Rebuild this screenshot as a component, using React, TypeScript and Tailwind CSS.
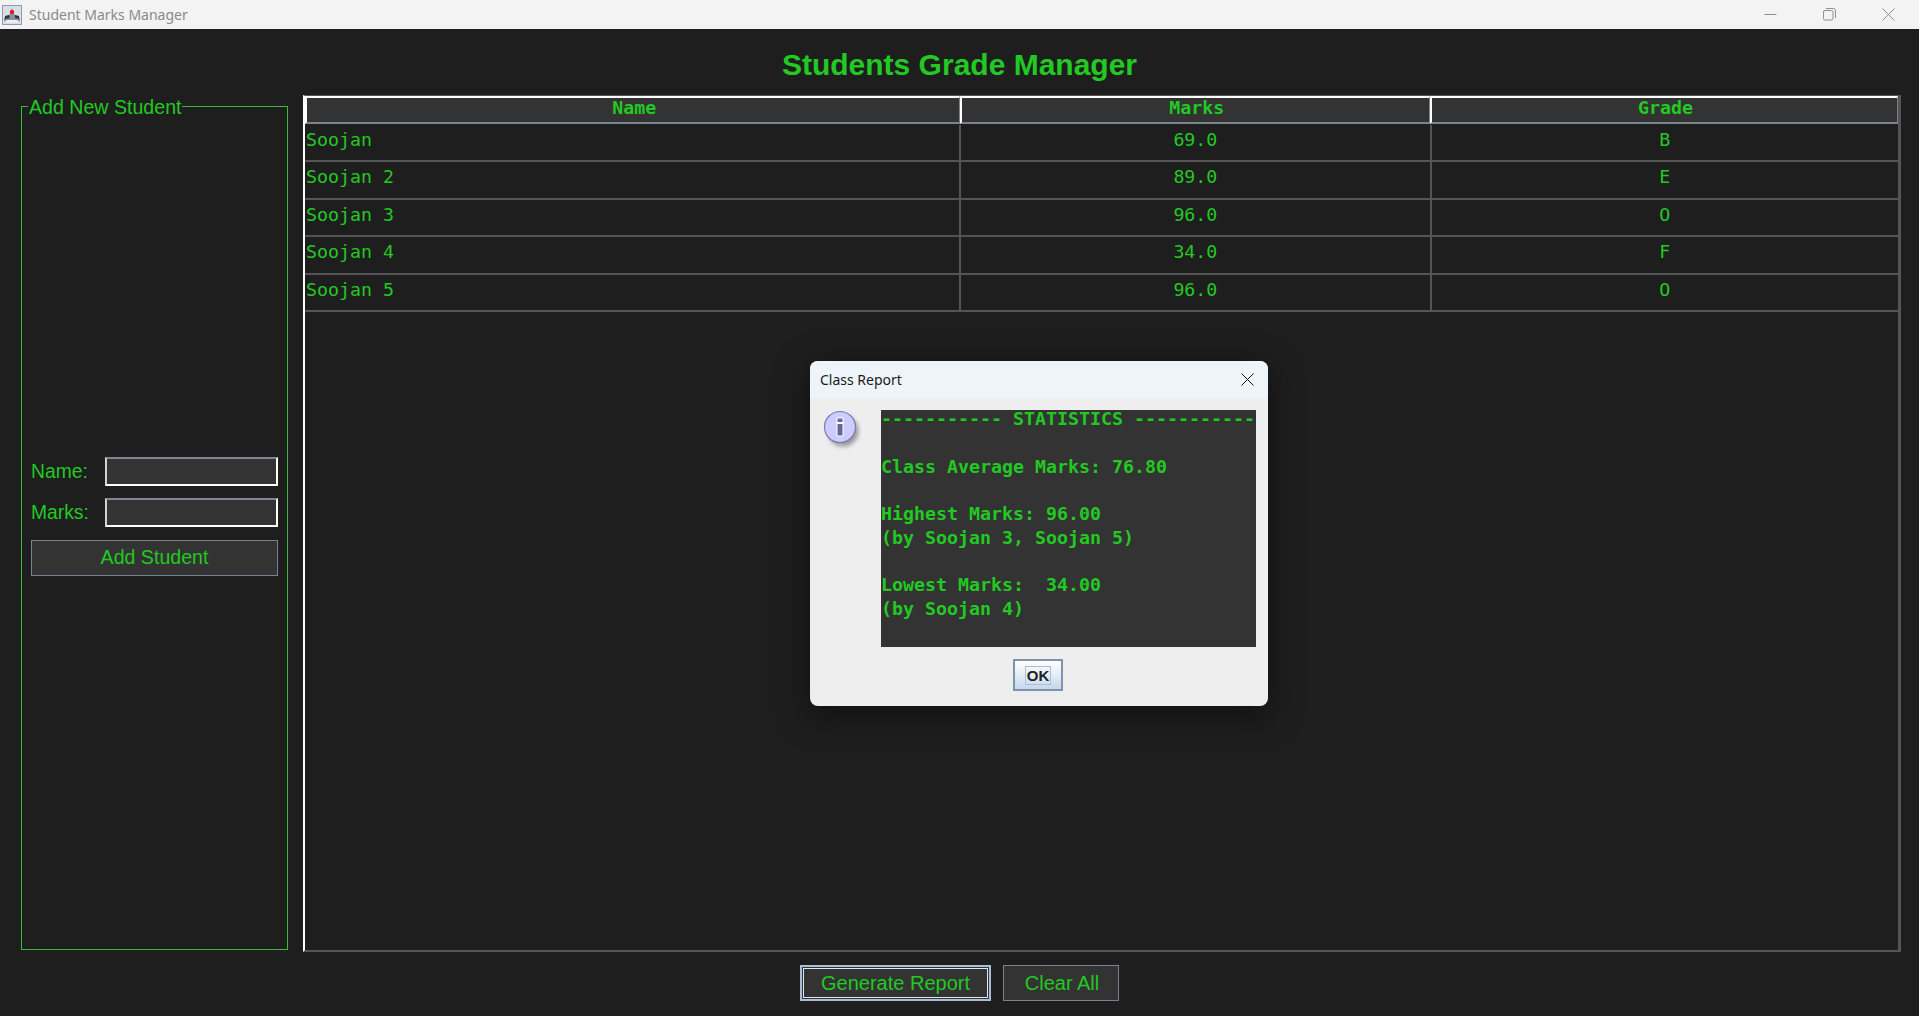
const green = 'text-[#22c922]';

const students = [
  { name: 'Soojan', marks: '69.0', grade: 'B' },
  { name: 'Soojan 2', marks: '89.0', grade: 'E' },
  { name: 'Soojan 3', marks: '96.0', grade: 'O' },
  { name: 'Soojan 4', marks: '34.0', grade: 'F' },
  { name: 'Soojan 5', marks: '96.0', grade: 'O' },
];

function JavaIcon() {
  return (
    <svg width="20" height="20" viewBox="0 0 20 20" className="shrink-0">
      <rect x="0.5" y="0.5" width="19" height="19" fill="#d8dde6" stroke="#8f9bb0" />
      <path d="M2 13 L8 9 L10 3 L12 9 L18 13 L18 16 L2 16 Z" fill="#8a8e96" />
      <path d="M3 11 L7 10 L8 13 L3 14 Z M13 10 L17 11 L17 14 L13 13 Z" fill="#30343c" />
      <path d="M4 15 L16 15 L15 17.5 L5 17.5 Z" fill="#f2f2f2" />
      <circle cx="10" cy="7" r="2.2" fill="#e01b24" />
    </svg>
  );
}

function WindowButtons() {
  return (
    <div className="flex items-center gap-[46px] pr-[24px]">
      <svg width="13" height="13" viewBox="0 0 13 13">
        <path d="M0.5 6.5H12.5" stroke="#8f8f8f" strokeWidth="1" />
      </svg>
      <svg width="13" height="13" viewBox="0 0 13 13" fill="none" stroke="#8f8f8f">
        <rect x="0.5" y="2.5" width="9.5" height="9.5" rx="1.5" />
        <path d="M3 0.5H10.5A2 2 0 0 1 12.5 2.5V10" />
      </svg>
      <svg width="13" height="13" viewBox="0 0 13 13" stroke="#8f8f8f">
        <path d="M0.5 0.5L12.5 12.5M12.5 0.5L0.5 12.5" />
      </svg>
    </div>
  );
}

function AddStudentPanel() {
  return (
    <div className="relative mt-[11px] ml-[21px] h-[844px] w-[267px] border border-[#3fb83f] flex flex-col justify-center pb-[24px] px-[9px]">
      <span className={`absolute -top-[12px] left-[6px] bg-[#1e1e1e] pl-[1px] text-[19.6px] leading-[24px] ${green}`}>
        Add New Student
      </span>
      <div className="flex flex-col">
        <div className="flex items-center justify-between h-[29px]">
          <span className={`pt-[2px] text-[19.3px] ${green}`}>Name:</span>
          <div className="w-[173px] h-[29px] bg-[#333333] border-2 border-white border-t-[#7d8794] border-l-[#d0d4d8]" />
        </div>
        <div className="flex items-center justify-between h-[29px] mt-[12px]">
          <span className={`pt-[2px] text-[19.3px] ${green}`}>Marks:</span>
          <div className="w-[173px] h-[29px] bg-[#333333] border-2 border-white border-t-[#7d8794] border-l-[#d0d4d8]" />
        </div>
        <button className={`mt-[13px] h-[36px] pt-[1px] bg-[#333333] border border-[#77838f] text-[19.6px] ${green}`}>
          Add Student
        </button>
      </div>
    </div>
  );
}

function StudentTable() {
  return (
    <div className="ml-[15px] w-[1598px] h-[857px] border-l-2 border-l-white border-b-2 border-b-[#555555] border-r-[3px] border-r-[#555555] border-t border-t-[#555555] font-['DejaVu_Sans_Mono',monospace] text-[18.27px]">
      <div className={`flex h-[29px] pb-[1px] font-bold ${green}`}>
        {['Name', 'Marks', 'Grade'].map((label, i) => (
          <div
            key={label}
            className={`flex items-center justify-center bg-[#333333] border-t-2 border-t-white border-l-2 border-l-white border-b-2 border-b-[#77838f] border-r border-r-[#77838f] pb-[4px] pl-[2px] ${
              i === 0 ? 'w-[657px]' : i === 1 ? 'w-[471px]' : 'w-[469px]'
            }`}
          >
            {label}
          </div>
        ))}
      </div>
      {students.map((s) => (
        <div key={s.name} className={`flex h-[37.4px] border-b-2 border-b-[#555555] leading-[29px] ${green}`}>
          <div className="w-[657px] pl-[1px] border-r-2 border-r-[#555555]">{s.name}</div>
          <div className="w-[471px] text-center border-r-2 border-r-[#555555]">{s.marks}</div>
          <div className="w-[467px] text-center">{s.grade}</div>
        </div>
      ))}
    </div>
  );
}

function InfoIcon() {
  return (
    <svg width="40" height="44" viewBox="0 0 40 44" className="shrink-0">
      <defs>
        <filter id="blur" x="-30%" y="-30%" width="160%" height="160%">
          <feGaussianBlur stdDeviation="2" />
        </filter>
      </defs>
      <circle cx="21" cy="21" r="15.5" fill="#9a9a9a" filter="url(#blur)" />
      <circle cx="18" cy="17" r="15.5" fill="#ccccff" stroke="#7b7bb0" strokeWidth="1.2" />
      <rect x="14.5" y="7.5" width="7" height="19" fill="#ffffff" />
      <rect x="15.5" y="8.5" width="5" height="3.5" fill="#666699" />
      <rect x="15.5" y="14" width="5" height="11.5" fill="#666699" />
    </svg>
  );
}

function ReportDialog() {
  const lines = [
    '----------- STATISTICS -----------',
    '',
    'Class Average Marks: 76.80',
    '',
    'Highest Marks: 96.00',
    '(by Soojan 3, Soojan 5)',
    '',
    'Lowest Marks:  34.00',
    '(by Soojan 4)',
  ];
  const tops = ['h-[24px]', 'h-[24px]', 'h-[24px]', 'h-[23px]', 'h-[24px]', 'h-[24px]', 'h-[23px]', 'h-[24px]', 'h-[24px]'];

  return (
    <div className="absolute left-[810px] top-[361px] w-[458px] h-[345px] rounded-[8px] bg-[#eeeeee] shadow-[0_8px_32px_rgba(0,0,0,0.5)] overflow-hidden flex flex-col">
      <div className="h-[37px] bg-[#edf4fa] flex items-center justify-between pl-[10px] pr-[14px]">
        <span className="text-[14px] text-[#1a1a1a] font-['Noto_Sans',sans-serif]">Class Report</span>
        <svg width="13" height="13" viewBox="0 0 13 13" stroke="#111111">
          <path d="M0.5 0.5L12.5 12.5M12.5 0.5L0.5 12.5" />
        </svg>
      </div>
      <div className="flex pl-[12px] pr-[12px] pt-[12px]">
        <div className="w-[59px]">
          <InfoIcon />
        </div>
        <div className={`w-[375px] h-[237px] bg-[#333333] font-['DejaVu_Sans_Mono',monospace] font-bold text-[18.27px] ${green}`}>
          {lines.map((line, i) => (
            <div key={i} className={`${tops[i]} leading-[18px] whitespace-pre`}>
              {line}
            </div>
          ))}
        </div>
      </div>
      <div className="flex justify-center pt-[12px] pr-[2px]">
        <button className="w-[50px] h-[32px] border-2 border-[#7f93ad] bg-gradient-to-b from-[#ffffff] via-[#e4edf5] to-[#c6d8ea] text-[15px] font-bold text-[#222222] leading-none">
          <span className="border border-[#a8c0d8] px-[1px]">OK</span>
        </button>
      </div>
    </div>
  );
}

export default function App() {
  return (
    <div className="relative w-[1919px] h-[1016px] overflow-hidden bg-[#1e1e1e] font-['Liberation_Sans',sans-serif] flex flex-col">
      <div className="h-[29px] bg-[#f3f3f3] flex items-center justify-between pl-[2px]">
        <div className="flex items-center gap-[7px]">
          <JavaIcon />
          <span className="text-[14px] text-[#8a8a8a] font-['Noto_Sans',sans-serif]">Student Marks Manager</span>
        </div>
        <WindowButtons />
      </div>

      <div className="h-[66px] flex items-center justify-center pt-[5px]">
        <h1 className={`text-[30px] font-bold ${green}`}>Students Grade Manager</h1>
      </div>

      <div className="flex h-[857px]">
        <AddStudentPanel />
        <StudentTable />
      </div>

      <div className="flex-1 flex items-center justify-center gap-[12px] pb-[2px]">
        <button className={`w-[191px] h-[36px] bg-[#333333] border-2 border-[#a9bdd4] outline outline-1 -outline-offset-4 outline-[#dfe8f0] text-[20px] ${green}`}>
          Generate Report
        </button>
        <button className={`w-[116px] h-[36px] pl-[2px] bg-[#333333] border border-[#77838f] text-[20px] ${green}`}>
          Clear All
        </button>
      </div>

      <ReportDialog />
    </div>
  );
}
